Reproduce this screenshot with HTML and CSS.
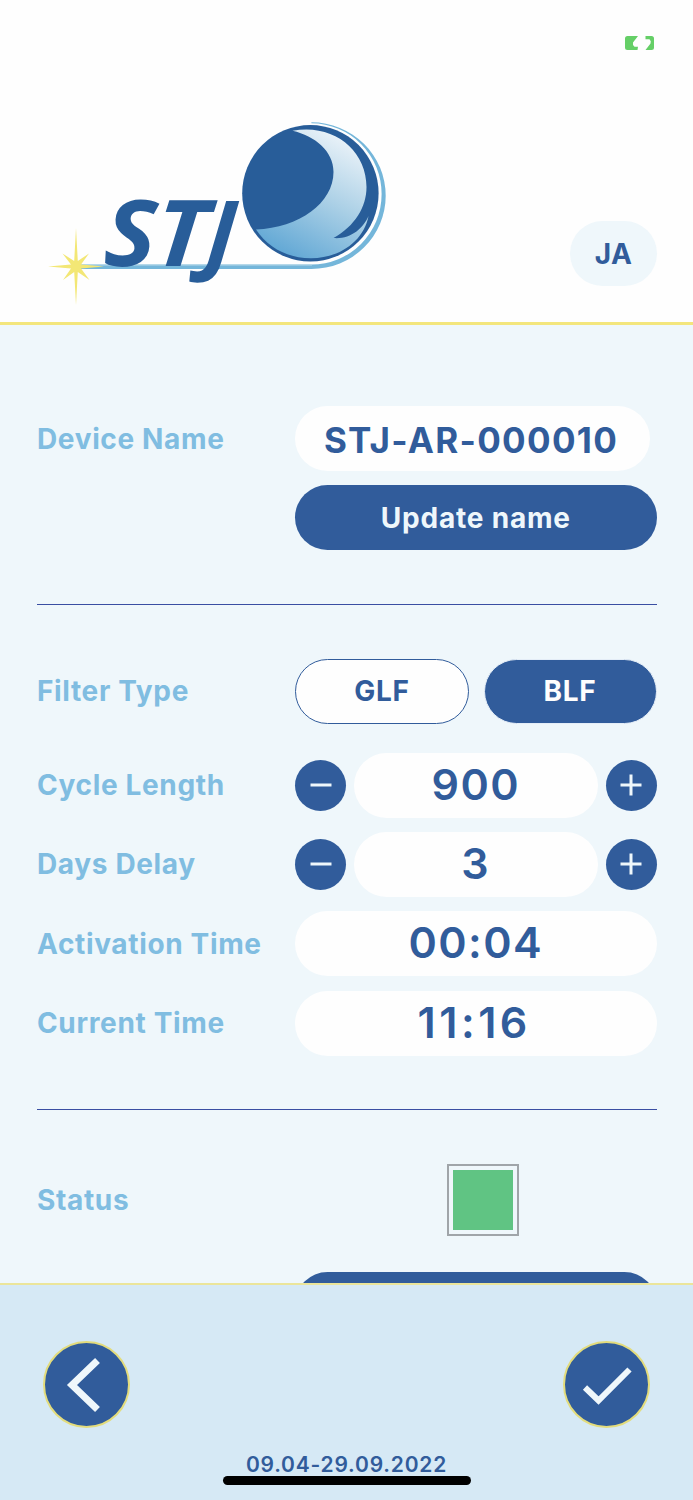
FILE: index.html
```html
<!DOCTYPE html>
<html lang="en">
<head>
    <meta charset="UTF-8">
    <title>STJ Device Settings</title>
    <link rel="stylesheet" href="styles.css">
</head>
<body>
    <header class="header">
        <svg class="battery" width="30" height="14" viewBox="0 0 30 14">
            <path d="M2.500 0H13L8 6.500Q7.300 9 9.500 10.800H13L12.500 14H2.500Q0 14 0 11.500V2.500Q0 0 2.500 0Z"/>
            <path d="M20.500 0H26.500Q29 0 29 2.500V11.500Q29 14 26.500 14H20.500L25.500 7.500Q26.500 5 24.500 3.300H20.500Z"/>
        </svg>
        <svg class="logo" width="350" height="190" viewBox="40 115 350 190">
            <defs>
                <linearGradient id="shine" x1="285" y1="255" x2="350" y2="135" gradientUnits="userSpaceOnUse">
                    <stop offset="0" stop-color="#62a8d5"/>
                    <stop offset="0.5" stop-color="#abd0e6"/>
                    <stop offset="1" stop-color="#eff5fa"/>
                </linearGradient>
            </defs>
            <path fill="#74b6da" d="M311.400 122.300A74.300 73.400 0 0 1 385.700 195.700A74.300 73.300 0 0 1 311.400 269H76V264.500H311.400A70.200 70.200 0 0 0 381.600 194.300A70.200 70.500 0 0 0 311.400 123.300Z"/>
            <path fill="#b5d8e9" d="M76 264H312V265.500H76Z"/>
            <circle cx="310.400" cy="193.300" r="68.200" fill="#285d99"/>
            <path fill="url(#shine)" d="M292.500 130.800C333 123 366.500 150 366.500 187C366.500 207 355 226 333.500 238C350 239.500 363 229 368.500 216C364 240 341 258.200 311 258.200C288 258.200 268 248 256 229.500C299 228 333.500 203 333.500 172C333.500 151 315 136 292.500 130.800Z"/>
            <g class="logo-text">
                <text transform="translate(103 266) skewX(-3)" textLength="52" lengthAdjust="spacingAndGlyphs">S</text>
                <text transform="translate(153 266) skewX(-5)" textLength="52" lengthAdjust="spacingAndGlyphs">T</text>
                <text transform="translate(204.500 264) scale(0.940 0.960) skewX(-5)">J</text>
            </g>
            <path fill="#f3e775" d="M76 228L77.800 261L89 253.500L81 264.500L104 266.500L81 268.500L89.500 280L77.800 272L76 305L74.200 272L63 280L71 268.500L48 266.500L71 264.500L62.500 253.500L74.200 261Z"/>
        </svg>
        <button class="lang">JA</button>
    </header>

    <main class="settings">
        <section class="group">
            <div class="row">
                <label>Device Name</label>
                <div class="pill device">STJ-AR-000010</div>
            </div>
            <div class="row">
                <span></span>
                <button class="btn">Update name</button>
            </div>
        </section>

        <section class="group filter">
            <div class="row types">
                <label>Filter Type</label>
                <div class="choices">
                    <button class="choice">GLF</button>
                    <button class="choice active">BLF</button>
                </div>
            </div>
            <div class="row">
                <label>Cycle Length</label>
                <div class="stepper">
                    <button class="step"><svg width="24" height="24" viewBox="0 0 24 24"><path d="M1.500 12H22.500"/></svg></button>
                    <div class="pill">900</div>
                    <button class="step"><svg width="24" height="24" viewBox="0 0 24 24"><path d="M1.500 12H22.500M12 1.500V22.500"/></svg></button>
                </div>
            </div>
            <div class="row">
                <label>Days Delay</label>
                <div class="stepper">
                    <button class="step"><svg width="24" height="24" viewBox="0 0 24 24"><path d="M1.500 12H22.500"/></svg></button>
                    <div class="pill">3</div>
                    <button class="step"><svg width="24" height="24" viewBox="0 0 24 24"><path d="M1.500 12H22.500M12 1.500V22.500"/></svg></button>
                </div>
            </div>
            <div class="row">
                <label>Activation Time</label>
                <div class="pill">00:04</div>
            </div>
            <div class="row">
                <label>Current Time</label>
                <div class="pill current">11:16</div>
            </div>
        </section>

        <section class="group status">
            <div class="row">
                <label>Status</label>
                <div class="status-box"></div>
            </div>
            <div class="row">
                <span></span>
                <button class="btn"></button>
            </div>
        </section>
    </main>

    <footer class="footer">
        <div class="actions">
            <button class="round"><svg width="83" height="83" viewBox="0 0 83 83"><path d="M52.500 17.500L27 42L52.500 66.500"/></svg></button>
            <button class="round"><svg width="83" height="83" viewBox="0 0 83 83"><path class="check" d="M20 44.500L33.500 57.500L64.500 26.500"/></svg></button>
        </div>
        <div class="dates">09.04-29.09.2022</div>
        <div class="home-bar"></div>
    </footer>
</body>
</html>
```

FILE: styles.css
```css
* {
    box-sizing: border-box;
}
body {
    margin: 0;
    height: 1500px;
    display: flex;
    flex-direction: column;
    overflow: hidden;
    background: #eff7fb;
    color: #315c9b;
    font-family: Inter, sans-serif;
    font-weight: 700;
}
button {
    padding: 0;
    border: none;
    font: inherit;
    color: inherit;
}
svg {
    display: block;
}
.header {
    flex: none;
    height: 325px;
    padding: 36px 36px 0 40px;
    display: grid;
    grid-template-columns: 350px auto;
    grid-template-rows: 79px 190px;
    justify-content: space-between;
    background: #fefefe;
    border-bottom: 3px solid #f3e67c;
}
.battery {
    grid-column: 2;
    justify-self: end;
    margin-right: 2px;
    fill: #65cf67;
}
.logo {
    grid-row: 2;
}
.logo-text {
    font-family: "Noto Sans", sans-serif;
    font-size: 92px;
    font-weight: 700;
    font-style: italic;
    fill: #285d99;
}
.lang {
    grid-row: 2;
    width: 87px;
    height: 65px;
    margin-top: 106px;
    border-radius: 33px;
    background: #eff7fb;
    font-size: 28px;
    letter-spacing: 0.3px;
}
.settings {
    flex: 1;
    min-height: 0;
    overflow: hidden;
    padding: 81px 36.500px 0 37px;
}
.group {
    display: flex;
    flex-direction: column;
    gap: 14.400px;
    padding-bottom: 53.500px;
    margin-bottom: 54px;
    border-bottom: 1px solid #3a4ea2;
}
.row {
    display: grid;
    grid-template-columns: 258px 361.500px;
    align-items: center;
    min-height: 65px;
}
.types {
    margin-bottom: 14.300px;
}
label {
    color: #80bde1;
    font-size: 28px;
    letter-spacing: 0.650px;
}
.pill {
    height: 65px;
    line-height: 62px;
    border-radius: 33px;
    background: #fefefe;
    text-align: center;
    font-size: 43px;
    font-weight: 600;
    letter-spacing: 1.400px;
}
.device {
    width: 355px;
    padding-right: 3px;
    line-height: 69px;
    font-size: 35px;
    font-weight: 700;
    letter-spacing: 1.300px;
}
.current {
    padding-right: 3px;
    letter-spacing: 3.500px;
}
.btn {
    height: 65px;
    border-radius: 33px;
    background: #315c9b;
    color: #eff7fb;
    font-size: 28px;
    letter-spacing: 0.800px;
}
.choices {
    display: flex;
    justify-content: space-between;
}
.choice {
    width: 174px;
    height: 65px;
    border: 1.500px solid #315c9b;
    border-radius: 33px;
    background: #fefefe;
    font-size: 28px;
    letter-spacing: 0.800px;
}
.choice.active {
    width: 173px;
    border-color: #e4edf7;
    background: #315c9b;
    color: #fefefe;
}
.stepper {
    display: flex;
    align-items: center;
    justify-content: space-between;
}
.stepper .pill {
    width: 244px;
}
.step {
    width: 51px;
    height: 51px;
    display: flex;
    align-items: center;
    justify-content: center;
    border-radius: 50%;
    background: #315c9b;
}
.step path {
    stroke: #eff7fb;
    stroke-width: 3;
}
.status {
    gap: 36px;
    margin: 0;
    padding: 0;
    border: none;
}
.status-box {
    justify-self: center;
    width: 72px;
    height: 72px;
    margin-left: 15px;
    padding: 4px;
    border: 2px solid #a0a5a9;
    background: #60c483 content-box;
}
.footer {
    flex: none;
    height: 217px;
    padding-top: 56px;
    border-top: 2px solid #ebe59a;
    background: #d6e9f5;
}
.actions {
    display: flex;
    justify-content: space-between;
    padding: 0 43px;
}
.round {
    width: 87px;
    height: 87px;
    border: 2px solid #e3dc7c;
    border-radius: 50%;
    background: #315c9b;
}
.round path {
    fill: none;
    stroke: #eff7fb;
    stroke-width: 7;
}
.round .check {
    stroke-width: 6;
}
.dates {
    margin-top: 24px;
    line-height: 26px;
    text-align: center;
    font-size: 21px;
    font-weight: 600;
    letter-spacing: 0.800px;
}
.home-bar {
    width: 248px;
    height: 9px;
    margin: -2px auto 0;
    border-radius: 5px;
    background: #000;
}
```
